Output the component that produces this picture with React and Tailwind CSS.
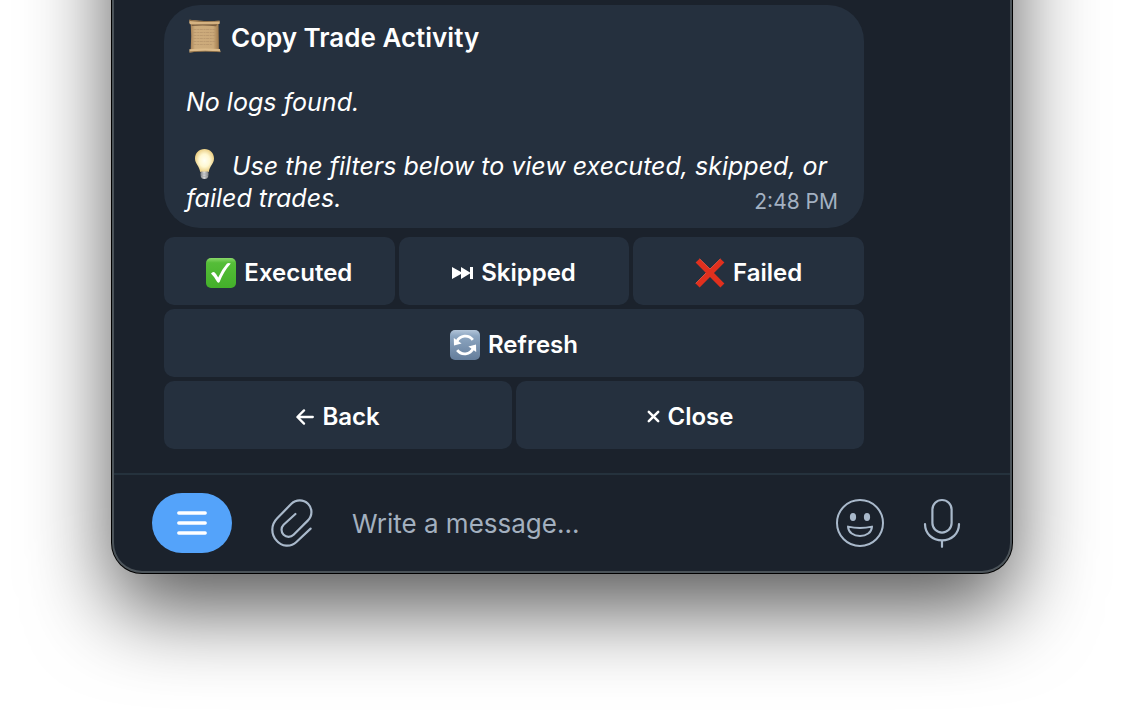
import React, { useState } from "react";

const ScrollIcon = ({ className }) => (
    <svg viewBox="0 0 34 34" className={className} aria-hidden="true">
        <defs>
            <linearGradient id="paper" x1="0" y1="0" x2="1" y2="0">
                <stop offset="0" stopColor="#a98458" />
                <stop offset="0.15" stopColor="#cdac7d" />
                <stop offset="0.8" stopColor="#cba979" />
                <stop offset="1" stopColor="#a07a4c" />
            </linearGradient>
        </defs>
        <path d="M3.2 4H31L31.4 31H3.2Q4.2 17 3.2 4Z" fill="url(#paper)" />
        <path d="M4 5.4L30 5.2L28.5 7.2Q16 6 4.2 7Z" fill="#7d6040" />
        <path d="M2 1.6Q1.2 3.6 2.4 5.2Q16 4.4 32 5Q32.6 3.4 32 1.8Q16 2.8 2 0.8Z" fill="#d6b382" />
        <path d="M1.8 0.8Q16 2.8 32 1.8V2.6Q16 3.6 1.8 2Z" fill="#8b6b43" />
        <path d="M6 10.5H28M6 13.5H27M6 16.5H28M6 19.5H26M6 22.5H28M6 25.5H25" stroke="#b3926a" strokeWidth="0.7" strokeDasharray="3 0.7 2 0.6" />
        <path d="M1.8 30.2Q16 29 32.4 30L33 33Q16 31.4 2 33.4Z" fill="#dcbb8a" />
        <path d="M2 32.6Q16 30.8 33 32.4V33.2Q16 31.8 2 33.4Z" fill="#8a6940" />
    </svg>
);

const BulbIcon = ({ className }) => (
    <svg viewBox="0 0 38 32" className={className} aria-hidden="true">
        <defs>
            <radialGradient id="glow" cx="0.5" cy="0.5" r="0.55">
                <stop offset="0" stopColor="#fffff4" />
                <stop offset="0.5" stopColor="#fff8d2" />
                <stop offset="1" stopColor="#e6c675" />
            </radialGradient>
            <linearGradient id="socket" x1="0" y1="0" x2="1" y2="0">
                <stop offset="0" stopColor="#77797b" />
                <stop offset="0.45" stopColor="#d9dadb" />
                <stop offset="1" stopColor="#77797b" />
            </linearGradient>
        </defs>
        <path d="M18.5 1C13 1 9 5 9 10.5C9 16 13.6 18 14.2 24H22.8C23.4 18 28 16 28 10.5C28 5 24 1 18.5 1Z" fill="url(#glow)" />
        <path d="M14.6 23.6H22.4V28Q22 30.8 18.5 31Q15 30.8 14.6 28Z" fill="url(#socket)" />
        <path d="M14.6 26H22.4M15 28.4H22" stroke="#a5a7a9" strokeWidth="0.7" />
    </svg>
);

const CheckIcon = () => (
    <svg viewBox="0 0 30 30" className="size-[30px]" aria-hidden="true">
        <defs>
            <linearGradient id="green" x1="0" y1="0" x2="0" y2="1">
                <stop offset="0" stopColor="#8ad86a" />
                <stop offset="0.16" stopColor="#55bd38" />
                <stop offset="1" stopColor="#43b02a" />
            </linearGradient>
        </defs>
        <rect width="30" height="30" rx="5" fill="url(#green)" />
        <path d="M5 15.4Q6.6 13.2 8.4 14.2Q10.6 16 12.2 19.4Q15.6 11.6 21 5.4Q22.6 4.6 24.8 5.4Q17.4 13.6 13.6 24Q12.6 25.4 11.2 24Q8.8 19 5 15.4Z" fill="#fff" />
    </svg>
);

const SkipIcon = () => (
    <svg viewBox="0 0 21 12" className="h-3 w-[21px]" fill="#fff" aria-hidden="true">
        <path d="M0 0L9 5V0L18 5.4V0H21V12H18V6.6L9 12V7L0 12Z" />
    </svg>
);

const CrossIcon = () => (
    <svg viewBox="0 0 30 30" className="size-[30px]" aria-hidden="true">
        <path d="M4.6 0.8L15 11L25.4 0.8L29.4 4.6L19 15L29.4 25.4L25.4 29.4L15 19L4.6 29.4L0.6 25.4L11 15L0.6 4.6Z" fill="#e0301e" />
        <path d="M4.6 0.8L15 11L25.4 0.8M0.6 25.4L11 15" fill="none" stroke="#ee5a45" strokeWidth="0.8" />
    </svg>
);

const RefreshIcon = () => (
    <svg viewBox="0 0 30 30" className="size-[30px]" aria-hidden="true">
        <defs>
            <linearGradient id="steel" x1="0" y1="0" x2="0" y2="1">
                <stop offset="0" stopColor="#b4c6da" />
                <stop offset="0.2" stopColor="#8da6c1" />
                <stop offset="1" stopColor="#647d9b" />
            </linearGradient>
        </defs>
        <rect width="30" height="30" rx="5" fill="url(#steel)" />
        <path d="M6.8 11.6A9.4 9.4 0 0 1 22.8 9.8" fill="none" stroke="#fff" strokeWidth="2.8" />
        <path d="M3.8 8L4 15.4L11.6 13.6Z" fill="#fff" />
        <path d="M23.2 18.4A9.4 9.4 0 0 1 7.2 20.2" fill="none" stroke="#fff" strokeWidth="2.8" />
        <path d="M26.2 22L26 14.6L18.4 16.4Z" fill="#fff" />
    </svg>
);

const ArrowIcon = () => (
    <svg viewBox="0 0 18 16" className="h-4 w-[18px]" fill="none" stroke="#fff" strokeWidth="2.3" strokeLinecap="round" strokeLinejoin="round" aria-hidden="true">
        <path d="M8 1.4L1.4 8L8 14.6M1.6 8H16.8" />
    </svg>
);

const TimesIcon = () => (
    <svg viewBox="0 0 13 13" className="size-[13px]" stroke="#fff" strokeWidth="2.5" strokeLinecap="round" aria-hidden="true">
        <path d="M1.8 1.8L11.2 11.2M11.2 1.8L1.8 11.2" />
    </svg>
);

const ClipIcon = () => (
    <svg viewBox="0 0 48 48" className="size-12" fill="none" stroke="currentColor" strokeWidth="2.2" strokeLinecap="round" strokeLinejoin="round" aria-hidden="true">
        <path d="M27.4 15L15.6 25.8A7 7 0 0 0 25.6 35.8L40 21.4A11.7 11.7 0 0 0 23.4 4.8L9 19.4A16 16 0 0 0 8.6 41.6A13.6 13.6 0 0 0 28.4 43L42.6 29.6" />
    </svg>
);

const SmileIcon = () => (
    <svg viewBox="0 0 48 48" className="size-12" fill="none" stroke="currentColor" strokeWidth="2" strokeLinejoin="round" aria-hidden="true">
        <circle cx="24" cy="24" r="23" />
        <ellipse cx="17" cy="18" rx="3.1" ry="4.1" fill="currentColor" stroke="none" />
        <ellipse cx="31" cy="18" rx="3.1" ry="4.1" fill="currentColor" stroke="none" />
        <path d="M12 27.6Q24 30.4 36 27.6C35.6 33.6 30.4 37 24 37C17.6 37 12.4 33.6 12 27.6Z" />
    </svg>
);

const MicIcon = () => (
    <svg viewBox="0 0 48 50" className="h-[50px] w-12" fill="none" stroke="currentColor" strokeWidth="2.2" strokeLinecap="round" aria-hidden="true">
        <rect x="14.4" y="2" width="19.2" height="32.6" rx="9.6" />
        <path d="M7 26C7 35.8 14.6 42.4 24 42.4S41 35.8 41 26M24 42.4V48.8" />
    </svg>
);

const rows = [
    {
        cols: "grid-cols-3",
        items: [
            { label: "Executed", Icon: CheckIcon },
            { label: "Skipped", Icon: SkipIcon },
            { label: "Failed", Icon: CrossIcon },
        ],
    },
    { cols: "grid-cols-1", items: [{ label: "Refresh", Icon: RefreshIcon }] },
    {
        cols: "grid-cols-2",
        items: [
            { label: "Back", Icon: ArrowIcon },
            { label: "Close", Icon: TimesIcon },
        ],
    },
];

const App = () => {
    const [message, setMessage] = useState("");

    return (
        <div className="overflow-hidden bg-white px-28 pb-[148px] font-['Inter',sans-serif] text-[26px] leading-8 text-white">
            {/* the window runs on above the visible part of the chat */}
            <main className="-mt-40 rounded-b-[30px] border-2 border-t-0 border-[#4b5359] bg-[#1b222c] pt-40 shadow-[0_0_0_1px_#000,0_36px_84px_rgba(0,0,0,0.66)]">
                <section className="ml-[50px] max-w-[700px] pt-[5px] pb-6">
                    <article className="rounded-[36px] bg-[#25303e] px-[22px] pt-[17px] pb-[14px]">
                        <h1 className="flex h-8 items-center gap-2 font-semibold">
                            <ScrollIcon className="mb-1 h-[34px] w-[37px]" />
                            Copy Trade Activity
                        </h1>
                        <p className="mt-8 text-[25px] leading-8 italic">No logs found.</p>
                        <p className="mt-8 text-[25px] leading-8 italic">
                            <BulbIcon className="mr-2 -mt-2 inline-block h-8 w-[38px] align-middle" />
                            Use the filters below to view executed, skipped, or failed trades.
                            <time className="float-right mt-[6px] mr-1 text-[21px] leading-7 text-[#a3b1c2] not-italic">2:48 PM</time>
                        </p>
                    </article>

                    <div className="mt-[9px] flex flex-col gap-1">
                        {rows.map((row) => (
                            <div key={row.cols} className={`grid gap-1 ${row.cols}`}>
                                {row.items.map(({ label, Icon }) => (
                                    <button
                                        key={label}
                                        type="button"
                                        className="flex h-[68px] items-center justify-center gap-2 rounded-[10px] bg-[#25303e] pt-[3px] text-2xl font-semibold hover:bg-[#2d394a]"
                                    >
                                        <Icon />
                                        {label}
                                    </button>
                                ))}
                            </div>
                        ))}
                    </div>
                </section>

                <form
                    onSubmit={(e) => e.preventDefault()}
                    className="flex items-center gap-9 border-t-2 border-[#25323d] py-[18px] pr-11 pl-[38px] text-[#a9b9cb]"
                >
                    <button type="button" aria-label="Menu" className="flex h-[60px] w-20 items-center justify-center rounded-[30px] bg-[#54a3fa]">
                        <svg viewBox="0 0 30 24" className="h-6 w-[30px]" stroke="#fff" strokeWidth="3.4" strokeLinecap="round" aria-hidden="true">
                            <path d="M1.8 2H28.2M1.8 12H28.2M1.8 22H28.2" />
                        </svg>
                    </button>
                    <button type="button" aria-label="Attach file">
                        <ClipIcon />
                    </button>
                    <input
                        type="text"
                        aria-label="Message"
                        value={message}
                        onChange={(e) => setMessage(e.target.value)}
                        placeholder="Write a message..."
                        className="min-w-0 flex-1 pt-[2px] text-white outline-none placeholder:text-[#a3b0bf]"
                    />
                    <div className="flex items-center gap-[34px]">
                        <button type="button" aria-label="Emoji">
                            <SmileIcon />
                        </button>
                        <button type="button" aria-label="Record voice">
                            <MicIcon />
                        </button>
                    </div>
                </form>
            </main>
        </div>
    );
};

export default App;
